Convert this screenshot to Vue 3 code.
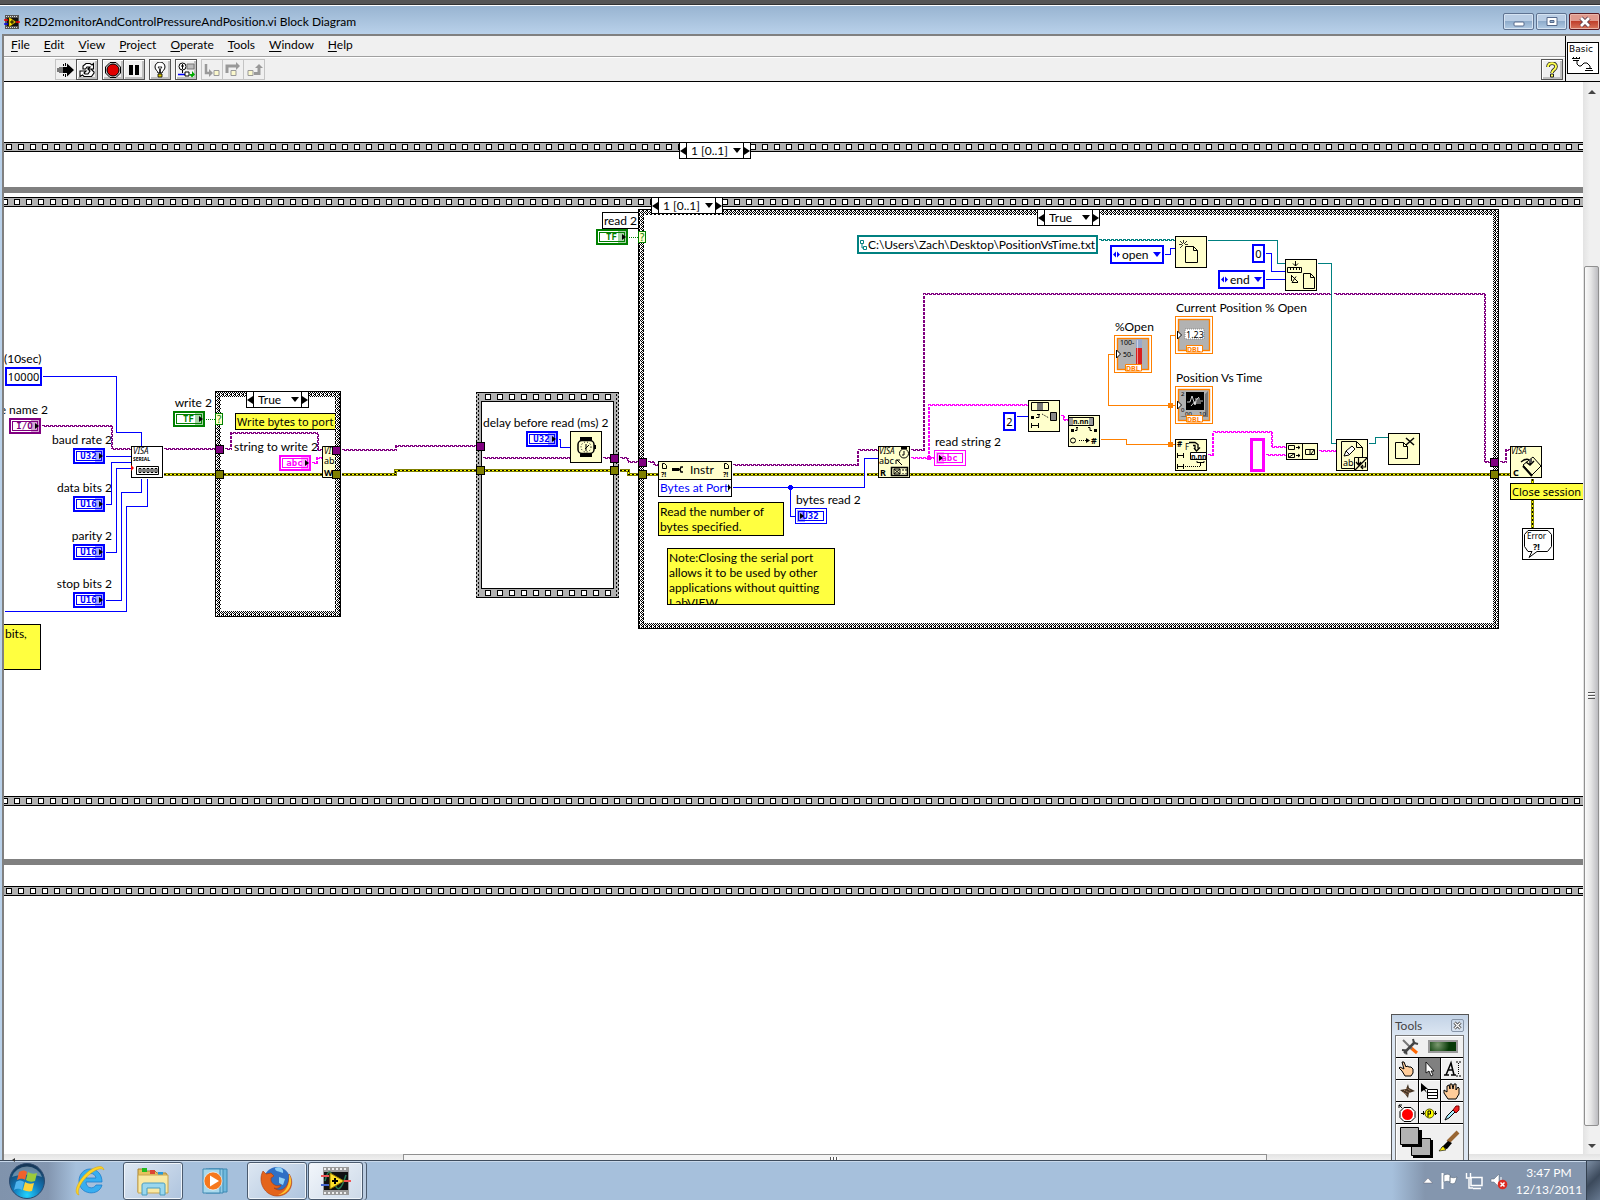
<script setup>
import { ref } from 'vue'

// Diagram coordinates are measured from the window corner; the canvas starts at (4, 82).
const ORIGIN_X = 4
const ORIGIN_Y = 82
const at = (x, y, w, h) => ({
  left: `${x - ORIGIN_X}px`,
  top: `${y - ORIGIN_Y}px`,
  ...(w ? { width: `${w}px` } : {}),
  ...(h ? { height: `${h}px` } : {})
})
const labelAt = (l) =>
  l.end
    ? { right: `calc(100% - ${l.x - ORIGIN_X}px)`, top: `${l.y - 8 - ORIGIN_Y}px` }
    : at(l.x, l.y - 8)

const menus = ['File', 'Edit', 'View', 'Project', 'Operate', 'Tools', 'Window', 'Help']

const labels = [
  { t: '(10sec)', x: 4, y: 359 },
  { t: 'e name 2', x: 48, y: 410, end: true },
  { t: 'baud rate 2', x: 112, y: 440, end: true },
  { t: 'data bits 2', x: 112, y: 488, end: true },
  { t: 'parity 2', x: 112, y: 536, end: true },
  { t: 'stop bits 2', x: 112, y: 584, end: true },
  { t: 'write 2', x: 212, y: 403, end: true },
  { t: 'string to write 2', x: 318, y: 447, end: true },
  { t: 'delay before read (ms) 2', x: 483, y: 423 },
  { t: 'bytes read 2', x: 796, y: 500 },
  { t: 'read string 2', x: 935, y: 442 },
  { t: '%Open', x: 1115, y: 327 },
  { t: 'Current Position % Open', x: 1176, y: 308 },
  { t: 'Position Vs Time', x: 1176, y: 378 }
]

const terminals = [
  { t: 'I/O', x: 9, y: 418, c: 'purple' },
  { t: 'U32', x: 73, y: 448, c: 'blue' },
  { t: 'U16', x: 73, y: 496, c: 'blue' },
  { t: 'U16', x: 73, y: 544, c: 'blue' },
  { t: 'U16', x: 73, y: 592, c: 'blue' },
  { t: 'TF', x: 173, y: 411, c: 'green' },
  { t: 'abc', x: 279, y: 455, c: 'pink' },
  { t: 'U32', x: 526, y: 431, c: 'blue' },
  { t: 'TF', x: 596, y: 229, c: 'green' },
  { t: 'U32', x: 795, y: 508, c: 'blue', sink: true },
  { t: 'abc', x: 934, y: 450, c: 'pink', sink: true }
]

const selectors = [
  { x: 679, y: 142, w: 72, options: ['1 [0..1]', '0 [0..1]'], name: 'Outer sequence frame' },
  { x: 651, y: 197, w: 72, options: ['1 [0..1]', '0 [0..1]'], name: 'Inner sequence frame' },
  { x: 246, y: 391, w: 63, options: ['True', 'False'], name: 'Write case' },
  { x: 1037, y: 209, w: 63, options: ['True', 'False'], name: 'Read case' }
]

const rings = [
  { x: 1110, y: 245, w: 54, options: ['open', 'replace', 'create'], name: 'File operation' },
  { x: 1218, y: 270, w: 47, options: ['end', 'start', 'current'], name: 'Seek from' }
]

const constants = ref([
  { x: 5, y: 367, w: 37, v: '10000', name: 'Timeout' },
  { x: 1252, y: 244, w: 13, v: '0', name: 'Offset' },
  { x: 1003, y: 412, w: 13, v: '2', name: 'String offset' }
])
const filePath = ref('C:\\Users\\Zach\\Desktop\\PositionVsTime.txt')

const strips = [
  { y: 142, p: 'film-a' },
  { y: 197, p: 'film-b' },
  { y: 796, p: 'film-b' },
  { y: 886, p: 'film-a' }
]

const blueWires = [
  '42,376 116,376 116,432 141,432 141,446',
  '105,456 131,456',
  '105,504 111,504 111,462 131,462',
  '105,552 116,552 116,468 131,468',
  '105,600 121,600 121,492 141,492 141,478',
  '4,611 126,611 126,506 147,506 147,478',
  '558,439 560,439 560,447 570,447',
  '732,487 864,487 864,458 878,458',
  '790,487 790,516 795,516',
  '1164,254 1170,254 1170,248 1175,248',
  '1265,253 1271,253 1271,271 1285,271',
  '1265,279 1285,279',
  '1016,416 1028,416'
]
const tealWires = [
  '1207,240 1277,240 1277,263 1285,263',
  '1317,263 1331,263 1331,443 1336,443',
  '1368,443 1375,443 1375,437 1388,437'
]
const orangeWires = [
  '1100,439 1126,439 1126,444 1175,444',
  '1170,444 1170,335 1175,335',
  '1175,405 1108,405 1108,354 1114,354'
]
const purpleWaves = [
  '41,425 111,425 111,448 131,448',
  '163,448 215,448',
  '224,448 230,448 230,432 317,432 317,449 322,449',
  '341,449 395,449 395,445 476,445',
  '482,457 570,457',
  '602,457 610,457',
  '619,457 627,457 627,461 638,461',
  '647,461 653,461 653,464 658,464',
  '732,464 857,464 857,449 878,449',
  '910,449 923,449 923,293 1329,293',
  '1333,293 1484,293 1484,461 1490,461',
  '1499,461 1505,461 1505,449 1510,449'
]
const pinkWaves = [
  '311,462 316,462 316,457 322,457',
  '910,457 934,457',
  '928,457 928,404 1028,404',
  '1060,415 1063,415 1063,419 1068,419',
  '1207,454 1212,454 1212,431 1271,431 1271,446 1286,446',
  '1265,454 1286,454',
  '1318,450 1336,450'
]
const tealWaves = ['1098,239 1175,239']
const waves = [
  ...purpleWaves.map((p) => ({ p, c: '#800080' })),
  ...pinkWaves.map((p) => ({ p, c: '#ff00ff' })),
  ...tealWaves.map((p) => ({ p, c: '#008080' }))
]
const errorWires = [
  '163,474 322,474',
  '341,474 395,474 395,470 610,470',
  '619,470 628,470 628,474 658,474',
  '732,474 863,474',
  '866,474 1510,474',
  '1532,478 1532,528'
]
const tunnels = [
  [215, 445, 0], [332, 446, 0], [476, 442, 0], [610, 454, 0], [638, 458, 0], [1490, 458, 0],
  [215, 470, 1], [332, 470, 1], [476, 466, 1], [610, 466, 1], [638, 470, 1], [1490, 470, 1]
]
</script>

<template>
  <div class="desktop">
    <div class="window">
      <header class="titlebar">
        <svg class="app-icon" width="16" height="14" viewBox="0 0 16 14">
          <rect x="1" width="14" height="14" fill="#555" />
          <path d="M2 1.5h12M2 12.5h12" stroke="#ddd" stroke-dasharray="1 1" />
          <rect x="3" y="3" width="11" height="8" fill="#111" />
          <path d="M5 2v10l7-5z" fill="#ffe400" stroke="#640" stroke-width=".5" />
          <path d="M0 5h4M12 7h4" stroke="red" stroke-width="1.4" />
          <path d="M0 9h4" stroke="#00f" stroke-width="1.4" />
          <path d="M6 7h4M8 5v4" stroke="#000" />
        </svg>
        <h1>R2D2monitorAndControlPressureAndPosition.vi Block Diagram</h1>
        <div class="window-buttons">
          <button aria-label="Minimize"><svg width="12" height="12" viewBox="0 0 12 12"><rect x="1" y="6" width="10" height="4" rx="1" fill="#fff" stroke="#566a8c" /></svg></button>
          <button aria-label="Maximize"><svg width="12" height="12" viewBox="0 0 12 12"><path fill-rule="evenodd" d="M1 1.5h10v8H1zM4 4.500h4v2H4z" fill="#fff" stroke="#566a8c" /></svg></button>
          <button class="close" aria-label="Close"><svg width="14" height="12" viewBox="0 0 14 12"><path d="M3 2l8 8M11 2l-8 8" stroke="#5c3a48" stroke-width="4.5" /><path d="M3 2l8 8M11 2l-8 8" stroke="#fff" stroke-width="2.7" /></svg></button>
        </div>
      </header>

      <div class="frame">
        <div class="bars">
          <div class="bars-main">
            <nav class="menubar">
              <button v-for="m in menus" :key="m"><u>{{ m[0] }}</u>{{ m.slice(1) }}</button>
            </nav>
            <div class="toolbar">
              <div class="tool-group">
                <button class="flat" aria-label="Run"><svg width="18" height="16" viewBox="0 0 18 16"><path d="M6 5h4V1.500L17 8l-7 6.500V11H6z" fill="#000" /><path d="M5 5v6M3 5v6M1 6v4M6.500 2v2M8.500 1v3M6.500 12v2M8.500 12v3" stroke="#000" /></svg></button>
                <button aria-label="Run continuously"><svg width="17" height="16" viewBox="0 0 17 16"><path d="M4 7V4l3-2.500h4l2 1.500 1.500-1.500V7H9l2-2H8L6.500 7zM1 9h6l-2 2 1 1h3l2-3-2-2h3l3 3v1l-2.500 3.500H5L3.500 13 1 14.500z" fill="#fff" stroke="#000" stroke-width="1.1" /></svg></button>
              </div>
              <div class="tool-group">
                <button aria-label="Abort"><svg width="16" height="16" viewBox="0 0 16 16"><path d="M5 .5h6L15.500 5v6L11 15.500H5L.5 11V5z" fill="#ccc" stroke="#000" /><circle cx="8" cy="8" r="6" fill="#e00000" stroke="#000" /></svg></button>
                <button aria-label="Pause"><svg width="16" height="16" viewBox="0 0 16 16"><path d="M3 3h4v10H3zM9 3h4v10H9z" /></svg></button>
              </div>
              <div class="tool-group">
                <button aria-label="Highlight execution"><svg width="12" height="16" viewBox="0 0 12 16"><path d="M4 11c0-2-3-3-3-6a5 5 0 0110 0c0 3-3 4-3 6z" fill="#fff" stroke="#000" /><path d="M4 5l1.500 2v4M8 5L6.500 7v4M4 5h4" fill="none" stroke="#000" stroke-width=".8" /><path d="M4 12h4v3H4z" fill="#dc0" stroke="#000" stroke-width=".8" /></svg></button>
              </div>
              <div class="tool-group">
                <button aria-label="Retain wire values"><svg width="17" height="16" viewBox="0 0 17 16"><circle cx="4.500" cy="4.500" r="3.500" fill="#fff" stroke="#000" /><path d="M4.500 2v5M3 4h3M4.500 8v3" stroke="#000" /><path d="M9 2h7v5H9z" fill="#bbb" stroke="#777" /><path d="M0 12.500h7" stroke="#00f" stroke-width="1.5" /><path d="M7 10h4v4H7z" fill="#fff" stroke="#000" /><path d="M11 12h3V9l3 3.500-3 3z" fill="#0a0" /></svg></button>
              </div>
              <div class="tool-group">
                <button class="flat" aria-label="Step into"><svg width="17" height="16" viewBox="0 0 17 16"><path d="M2 2v9h4" fill="none" stroke="#999" stroke-width="2.5" /><path d="M5 7l4 4-4 4z" fill="#999" /><path d="M10 8.500h5v5h-5z" fill="#fbf8cc" stroke="#999" /></svg></button>
                <button class="flat" aria-label="Step over"><svg width="17" height="16" viewBox="0 0 17 16"><path d="M2 11V4h9" fill="none" stroke="#999" stroke-width="3" /><path d="M11 0l4 4-4 4z" fill="#999" /><path d="M6 8.500h5v5H6z" fill="#fbf8cc" stroke="#999" /></svg></button>
                <button class="flat" aria-label="Step out"><svg width="17" height="16" viewBox="0 0 17 16"><path d="M2 8.500h5v5H2z" fill="#fbf8cc" stroke="#999" /><path d="M8 11.500h5V5" fill="none" stroke="#999" stroke-width="3" /><path d="M9 6l4-4 4 4z" fill="#999" /></svg></button>
              </div>
              <button class="help" aria-label="Context help"><svg width="12" height="16" viewBox="0 0 12 16"><path d="M2 5c0-5 8-5 8-.5C10 8 6 7.500 6 11" fill="none" stroke="#222" stroke-width="3.6" /><path d="M2 5c0-5 8-5 8-.5C10 8 6 7.500 6 11" fill="none" stroke="#ffff50" stroke-width="2" /><path d="M4.500 12h3v3h-3z" fill="#ffff50" stroke="#222" /></svg></button>
            </div>
          </div>
          <div class="vi-pane">
            <div class="vi-icon">
              <span>Basic</span>
              <svg width="22" height="15" viewBox="0 0 22 15"><path d="M0 1.500h8M1 3.500h6M5 4v3l2 2h2l3-3h3l3 3v2M14 11.500h6M13 13.500h8M1.500 0v2M4.500 0v2M7.500 0v2" fill="none" stroke="#000" /></svg>
            </div>
          </div>
        </div>

        <div class="work">
          <main class="canvas">
            <svg class="wiring" width="100%" height="100%" shape-rendering="crispEdges">
              <defs>
                <pattern id="film-a" width="12" height="10" patternUnits="userSpaceOnUse" x="6" y="0">
                  <rect width="12" height="10" fill="#b2b2b2" /><rect x=".5" y="2.5" width="5" height="5" fill="#fff" stroke="#000" />
                </pattern>
                <pattern id="film-b" width="12" height="10" patternUnits="userSpaceOnUse" x="2" y="0">
                  <rect width="12" height="10" fill="#b2b2b2" /><rect x=".5" y="2.5" width="5" height="5" fill="#fff" stroke="#000" />
                </pattern>
                <pattern id="film-c" width="12" height="10" patternUnits="userSpaceOnUse" x="485">
                  <rect width="12" height="10" fill="#b2b2b2" /><rect x=".5" y="2.5" width="5" height="5" fill="#fff" stroke="#000" />
                </pattern>
                <pattern id="weave" width="4" height="4" patternUnits="userSpaceOnUse">
                  <rect width="4" height="4" fill="#fff" />
                  <path d="M0 0h1v1H0zM2 0h1v1H2zM1 1h1v1H1zM3 1h1v1H3zM2 2h1v1H2zM1 3h1v1H1zM3 3h1v1H3zM3 2h1v1H3z" />
                </pattern>
              </defs>
              <g transform="translate(-4 -82)">
                <rect x="4" y="187" width="100%" height="6" fill="#808080" />
                <rect x="4" y="859" width="100%" height="6" fill="#808080" />
                <g v-for="s in strips" :key="s.y" :transform="`translate(0 ${s.y})`">
                  <rect x="4" width="100%" height="10" :fill="`url(#${s.p})`" />
                  <path d="M4 .5h3000M4 9.500h3000" stroke="#000" />
                </g>

                <!-- structures -->
                <g fill="none">
                  <path fill-rule="evenodd" d="M215 391h126v226H215zM221 397v214h114V397z" fill="url(#weave)" />
                  <rect x="215.5" y="391.5" width="125" height="225" stroke="#000" />
                  <path fill-rule="evenodd" d="M638 209h861v420H638zM644 215v408h849V215z" fill="url(#weave)" />
                  <rect x="638.5" y="209.5" width="860" height="419" stroke="#000" />
                </g>
                <rect x="476" y="392" width="143" height="206" fill="#b2b2b2" />
                <g transform="translate(0 392)"><rect x="484" width="130" height="10" fill="url(#film-c)" /></g>
                <g transform="translate(0 588)"><rect x="484" width="130" height="10" fill="url(#film-c)" /></g>
                <rect x="481.5" y="401.5" width="132" height="187" fill="#fff" stroke="#000" />
                <path d="M476 392.500h143M476 597.500h143" stroke="#000" />
                <path d="M476.500 392v206M618.500 392v206M478.500 394v202M616.500 394v202" stroke="#000" stroke-dasharray="2 2" />

                <!-- wires -->
                <g fill="none" transform="translate(.5 .5)">
                  <polyline v-for="p in blueWires" :key="p" :points="p" stroke="#0000ff" />
                  <polyline v-for="p in tealWires" :key="p" :points="p" stroke="#008080" />
                  <polyline v-for="p in orangeWires" :key="p" :points="p" stroke="#ff8000" />
                  <g v-for="w in waves" :key="w.p" :stroke="w.c">
                    <polyline :points="w.p" stroke-dasharray="3 1" />
                    <polyline :points="w.p" stroke-dasharray="3 1" stroke-dashoffset="3" transform="translate(1 1)" />
                  </g>
                  <g v-for="p in errorWires" :key="p">
                    <polyline :points="p" stroke="#808000" stroke-width="3" />
                    <polyline :points="p" stroke="#ffff00" />
                    <polyline :points="p" stroke="#000" stroke-dasharray="2 2" />
                  </g>
                  <path d="M205 419h10M628 237h10" stroke="#008000" stroke-dasharray="1 1" />
                </g>
                <g fill="#ff8000"><circle cx="1170.5" cy="405.5" r="3" /><circle cx="1170.5" cy="444.5" r="3" /></g>
                <circle cx="790.5" cy="487.5" r="2.5" fill="#00f" />
                <circle cx="929" cy="458" r="2.5" fill="#f0f" />
              </g>

              <g class="nodes" transform="translate(-4 -82)" shape-rendering="auto">
                <!-- case selector terminals -->
                <g fill="#ffffcc" stroke="#008000"><rect x="215.5" y="413.5" width="7" height="11" /><rect x="638.5" y="231.5" width="7" height="11" /></g>
                <g font-size="10" fill="#008000"><text x="217" y="423">?</text><text x="640" y="241">?</text></g>

                <!-- serial configuration -->
                <g transform="translate(131 446)">
                  <rect x=".5" y=".5" width="31" height="31" fill="#fff" stroke="#000" />
                  <text x="2" y="8" font-size="8" font-style="italic">VISA</text>
                  <text x="2" y="15" font-size="5" font-weight="bold">SERIAL</text>
                  <path d="M5.500 20.500h22v8h-22z" fill="#fff" stroke="#000" />
                  <path d="M8 22.500h2v4H8zM12 22.500h2v4h-2zM16 22.500h2v4h-2zM20 22.500h2v4h-2zM24 22.500h2v4h-2z" fill="#fff" stroke="#000" />
                  <path d="M0 19l3 3-3 3z" fill="red" />
                </g>

                <!-- serial write, cropped by the case edge -->
                <g transform="translate(322 446)">
                  <path d="M0 0h13v32H0z" fill="#ffffcc" /><path d="M13 .5H.5v31H13" fill="none" stroke="#000" />
                  <text x="2" y="8" font-size="8" font-style="italic">VI</text>
                  <text x="2" y="18" font-size="9">ab</text>
                  <text x="2" y="30" font-size="9" font-weight="bold">W</text>
                </g>

                <!-- wait -->
                <g transform="translate(570 431)">
                  <rect x=".5" y=".5" width="31" height="31" fill="#ffffcc" stroke="#000" />
                  <path d="M10 6h12v20H10z" /><rect x="8" y="9.5" width="16" height="13" rx="4" fill="#ffffcc" stroke="#000" stroke-width="1.5" />
                  <circle cx="16" cy="16" r="5" fill="none" stroke="#000" stroke-dasharray="1 2" /><path d="M16 20v-7M15 18l4-4" stroke="#000" fill="none" /><path d="M24 14h2v4h-2z" />
                </g>

                <!-- property node -->
                <g transform="translate(658 461)">
                  <rect x=".5" y=".5" width="73" height="35" fill="#fff" stroke="#000" /><path d="M1 1h72v17H1z" fill="#ffffcc" /><path d="M0 18.500h74" stroke="#000" />
                  <g fill="none" stroke="#000"><path d="M4.500 2.500h2l2 2v3h-4zM66.500 2.500h2l2 2v3h-4z" /></g>
                  <text x="3" y="16" font-size="7" font-weight="bold">?!</text><text x="65" y="16" font-size="7" font-weight="bold">?!</text>
                  <path d="M14 8.500h7" stroke="#000" stroke-width="3" /><path d="M20 8.500h2M25 6h-2l-1 2.500 1 2.500h2" fill="none" stroke="#000" stroke-width="1.4" />
                  <path d="M70 23l3 3.500-3 3.500z" />
                </g>

                <!-- serial read -->
                <g transform="translate(878 446)">
                  <rect x=".5" y=".5" width="31" height="31" fill="#ffffcc" stroke="#000" />
                  <text x="1" y="8" font-size="8" font-style="italic">VISA</text>
                  <text x="1" y="18" font-size="9">abc</text><text x="2" y="30" font-size="9" font-weight="bold">R</text>
                  <circle cx="26" cy="7.5" r="4.500" fill="#ffffcc" stroke="#000" /><path d="M23 0h6v3h-6z" /><path d="M26 5v4h-2M19 14l5 5M18 18v-4h4" fill="none" stroke="#000" />
                  <path d="M13.500 21.500h16v8h-16z" fill="#ffffcc" stroke="#000" stroke-width="1.5" /><path d="M16 23h6v5h-6zM16 23l6 5M22 23l-6 5M25 23v2M25 27v1M28 23v2M28 27v1" fill="none" stroke="#000" />
                </g>

                <!-- string subset -->
                <g transform="translate(1028 400)">
                  <rect x=".5" y=".5" width="31" height="31" fill="#ffffcc" stroke="#000" />
                  <path d="M3.500 2.500h17v8h-17z" fill="#ffffcc" stroke="#000" /><path d="M9 3h6v7H9z" fill="#777" /><path d="M22.500 12.500h6v8h-6z" fill="#888" stroke="#000" />
                  <path d="M3 16h3v3H3z" /><path d="M8 17.500h3v-3M9 14.500h3M3.500 23v5M10.500 23v5M4 25.500h7" fill="none" stroke="#000" /><path d="M14 14l7 4" stroke="#000" stroke-dasharray="1 1" />
                </g>

                <!-- scan number -->
                <g transform="translate(1068 415)">
                  <rect x=".5" y=".5" width="31" height="31" fill="#ffffcc" stroke="#000" />
                  <path d="M.5 2.500h25v8H.5z" fill="#999" stroke="#000" /><path d="M5 3h16v7H5z" fill="#ffffcc" /><text x="5" y="9" font-size="7" font-weight="bold">n.nn</text>
                  <path d="M3 14h3v3H3zM26 14h3v3h-3z" /><path d="M7 15.500h2v-3M8 12.500h2M24 15.500h-2v-3M20 12.500h2" stroke="#000" fill="none" />
                  <circle cx="5" cy="25.5" r="2.5" fill="none" stroke="#000" /><path d="M11 25.500h7" stroke="#000" stroke-dasharray="1 1" /><path d="M18 23l4 2.500-4 2.500z" /><text x="23" y="29" font-size="9" font-weight="bold">#</text>
                </g>

                <!-- number to string -->
                <g transform="translate(1175 439)">
                  <rect x=".5" y=".5" width="31" height="31" fill="#ffffcc" stroke="#000" />
                  <text x="2" y="8" font-size="8" font-weight="bold">#</text><text x="10" y="11" font-size="8">F</text>
                  <path d="M14 3.500h6l3 2v4M18 6.500h2v3M19 9l2.500 3L25 8.500" fill="none" stroke="#000" stroke-width="1.3" />
                  <path d="M15.500 13.500h16v7h-16z" fill="#fff" stroke="#000" /><text x="16" y="20" font-size="7" font-weight="bold">n.nn</text>
                  <path d="M2.500 14v5M8.500 14v5M3 16.500h6M2.500 25v5M8.500 25v5M3 27.500h6M22 22v1.500h7V22M25.500 24v3" fill="none" stroke="#000" /><path d="M10 27.500h15" stroke="#000" stroke-dasharray="1 1" />
                </g>

                <!-- file open -->
                <g transform="translate(1175 236)">
                  <rect x=".5" y=".5" width="31" height="31" fill="#ffffcc" stroke="#000" />
                  <path d="M10.500 10.500h8l4 4v12h-12zM18.500 10.500v4h4" fill="#ffffcc" stroke="#000" />
                  <path d="M5 5l3 3M8.500 4v3M12 5l-3 3M4 8.500h3M10 8.500h3M5 12l3-3" stroke="#000" stroke-width=".8" />
                </g>

                <!-- set position -->
                <g transform="translate(1285 259)">
                  <rect x=".5" y=".5" width="31" height="31" fill="#ffffcc" stroke="#000" />
                  <path d="M10.500 2v5M8 4.500l2.500 2.500L13 4.500M2.500 8.500h14v5h-14zM5.500 9v2M8.500 9v2M11.500 9v2M14.500 9v2M6.500 16v6M13 23.500H7l4-6M7 17l6 6" fill="none" stroke="#000" />
                  <path d="M18.500 14.500h7l4 4v11h-11zM25.500 14.500v4h4" fill="#ffffcc" stroke="#000" />
                </g>

                <!-- concatenate strings -->
                <g transform="translate(1286 443)">
                  <rect x=".5" y=".5" width="31" height="16" fill="#ffffcc" stroke="#000" /><path d="M16.500 0v17" stroke="#000" />
                  <path d="M2.500 2.500h6v4h-6zM2.500 10.500h6v4h-6zM2.500 14.500l6-4M10 4.500h4M10 12.500h4M12 3l2 1.500-2 1.500M12 11l2 1.500-2 1.500M19.500 6.500h9v5h-9zM24 6v5M25 11l3-4" fill="none" stroke="#000" />
                </g>

                <!-- write text file -->
                <g transform="translate(1336 439)">
                  <rect x=".5" y=".5" width="31" height="31" fill="#ffffcc" stroke="#000" />
                  <path d="M5.500 2.500h15l6 6v21h-21zM20.500 2.500v6h6" fill="#ffffcc" stroke="#000" />
                  <path d="M8 17l2-5 6-5 3 3-6 6zM10 12l3 3" fill="#fff" stroke="#000" /><text x="7" y="27" font-size="9">ab</text>
                  <path d="M18.500 18.500h13v13h-13z" fill="#ffffcc" stroke="#000" /><path d="M31 19L19 31M22.500 19v6M20 23l2.500 3 2.500-3M29.500 23v5h-4M27 26l-2 2 2 2" fill="none" stroke="#000" stroke-width="1.2" />
                </g>

                <!-- close file -->
                <g transform="translate(1388 433)">
                  <rect x=".5" y=".5" width="31" height="31" fill="#ffffcc" stroke="#000" />
                  <path d="M7.500 9.500h8l4 4v12h-12zM15.500 9.500v4h4" fill="#ffffcc" stroke="#000" /><path d="M18 5l8 7M26 5l-8 7" stroke="#000" stroke-width="1.5" />
                </g>

                <!-- serial close -->
                <g transform="translate(1510 446)">
                  <rect x=".5" y=".5" width="31" height="31" fill="#ffffcc" stroke="#000" />
                  <text x="1" y="8" font-size="8" font-style="italic">VISA</text><text x="3" y="30" font-size="9" font-weight="bold">C</text>
                  <path d="M13 19l10-8 8 9-9 9z" fill="#ffffcc" stroke="#000" /><path d="M13 20l9 10" stroke="#000" stroke-width="2" />
                  <path d="M11 16l3-2c4-2 7 0 6 4M16 16l4 3 4-4" fill="none" stroke="#000" stroke-width="1.5" /><path d="M19 13h3v4h-3z" fill="#555" />
                </g>

                <!-- error handler -->
                <g transform="translate(1522 528)">
                  <rect x=".5" y=".5" width="31" height="31" fill="#fff" stroke="#000" />
                  <path d="M6 2.500h20l3.500 4v12l-4 5H15l-8 6 3-6H6l-3.500-5v-12z" fill="#fff" stroke="#000" />
                  <text x="5" y="11" font-size="8">Error</text><text x="11" y="22" font-size="9" font-weight="bold">?!</text>
                </g>

                <!-- double-precision indicators -->
                <g v-for="k in [[1114, 335], [1175, 316], [1175, 386]]" :key="k.join()" :transform="`translate(${k[0]} ${k[1]})`">
                  <rect x=".5" y=".5" width="37" height="37" fill="#fff" stroke="#ff8000" /><rect x="3.5" y="3.5" width="31" height="31" fill="#b2b2b2" stroke="#ff8000" stroke-width="1.4" />
                </g>
                <g transform="translate(1114 335)">
                  <text x="6" y="10" font-size="7">100-</text><text x="9" y="22" font-size="7">50-</text>
                  <path d="M22 4h6v10h-6z" fill="#99a8cc" /><path d="M22 13h6v21h-6z" fill="#d81f1f" /><path d="M23 5h1v28h-1z" fill="#fff" opacity=".5" />
                </g>
                <g transform="translate(1175 316)"><path d="M10 13h19v10H10z" fill="#fff" stroke="#888" stroke-dasharray="1 1" /><text x="11" y="22" font-size="9">1.23</text></g>
                <g transform="translate(1175 386)">
                  <path d="M5 31h28V5l-3 3v22H7z" fill="#777" /><path d="M11 6h18v18H11z" /><path d="M12 16h3l2-6 3 9 1-4h7M16 20l8-9M20 13h5M19 17h7" fill="none" stroke="#fff" stroke-width=".8" />
                  <text x="6" y="10" font-size="6">2</text><text x="6" y="26" font-size="6">0</text><text x="10" y="30" font-size="6">00</text><text x="24" y="30" font-size="6">10</text>
                </g>
                <g v-for="k in [[1114, 335], [1175, 316], [1175, 386]]" :key="'d' + k.join()" :transform="`translate(${k[0]} ${k[1]})`">
                  <path d="M2.500 15v8l4-4z" fill="#fff" stroke="#000" />
                  <path d="M11.500 36v-6.500h16V36z" fill="#fff" stroke="#ff8000" /><text x="12" y="36" font-size="7" font-weight="bold" fill="#ff8000">DBL</text>
                </g>
                <rect x="1251.5" y="439.5" width="12" height="31" fill="#fff" stroke="#ff00ff" stroke-width="3" />
              </g>
            </svg>

            <span v-for="l in labels" :key="l.t" class="label" :style="labelAt(l)">{{ l.t }}</span>
            <span class="label boxed" :style="at(602, 212, 37, 17)">read 2</span>
            <span class="label" :style="at(690, 462)">Instr</span>
            <span class="label property" :style="at(660, 480)">Bytes at Port</span>

            <div v-for="(t, i) in terminals" :key="i" class="terminal" :class="[t.c, { sink: t.sink }]" :style="at(t.x, t.y)">
              <span>{{ t.t }}</span><i></i>
            </div>

            <div class="note" :style="at(3, 624, 38, 46)">bits,</div>
            <div class="note single" :style="at(235, 413, 100, 17)">Write bytes to port</div>
            <div class="note" :style="at(658, 502, 126, 34)">Read the number of bytes specified.</div>
            <div class="note" :style="at(667, 548, 168, 57)">Note:Closing the serial port allows it to be used by other applications without quitting LabVIEW.</div>
            <div class="note single" :style="at(1510, 483, 76, 17)">Close session</div>

            <input v-for="c in constants" :key="c.name" v-model="c.v" class="constant" :aria-label="c.name" :style="at(c.x, c.y, c.w, 19)" />
            <div class="path-constant" :style="at(857, 235, 241, 19)">
              <svg width="8" height="12" viewBox="0 0 8 12"><path d="M1.500 1.500h3v3h-3zM4.500 7.500h3v3h-3zM3 5v4h1" fill="none" stroke="#008080" /></svg>
              <input v-model="filePath" aria-label="Log file path" />
            </div>
            <div v-for="r in rings" :key="r.name" class="ring" :style="at(r.x, r.y, r.w, 19)">
              <svg width="7" height="7" viewBox="0 0 7 7"><path d="M0 3.500L3 .5v6zM7 3.500L4 .5v6z" fill="#00f" /></svg>
              <select :aria-label="r.name"><option v-for="o in r.options" :key="o">{{ o }}</option></select>
              <svg class="drop" width="8" height="5" viewBox="0 0 8 5"><path d="M0 0h8L4 5z" fill="#00f" /></svg>
            </div>
            <div v-for="s in selectors" :key="s.name" class="selector" :style="at(s.x, s.y, s.w, 17)">
              <button aria-label="Previous"><svg width="6" height="8" viewBox="0 0 6 8"><path d="M6 0v8L0 4z" /></svg></button>
              <select :aria-label="s.name"><option v-for="o in s.options" :key="o">{{ o }}</option></select>
              <svg class="drop" width="8" height="5" viewBox="0 0 8 5"><path d="M0 0h8L4 5z" /></svg>
              <button aria-label="Next"><svg width="6" height="8" viewBox="0 0 6 8"><path d="M0 0v8l6-4z" /></svg></button>
            </div>

            <div v-for="(t, i) in tunnels" :key="'t' + i" class="tunnel" :class="{ error: t[2] }" :style="at(t[0], t[1])"></div>
          </main>

          <div class="vscroll">
            <button aria-label="Scroll up"><svg width="8" height="4" viewBox="0 0 8 4"><path d="M4 0l4 4H0z" fill="#444" /></svg></button>
            <div class="vthumb"><i></i></div>
            <button aria-label="Scroll down"><svg width="8" height="4" viewBox="0 0 8 4"><path d="M0 0h8L4 4z" fill="#444" /></svg></button>
          </div>
          <div class="hscroll"><span class="arrow"></span><div class="hthumb"><i></i></div></div>

          <aside class="palette">
            <div class="palette-title">Tools<button aria-label="Close palette"><svg width="9" height="9" viewBox="0 0 9 9"><path d="M1.500 1.500l6 6M7.500 1.500l-6 6" stroke="#444" stroke-width="3" /><path d="M1.500 1.500l6 6M7.500 1.500l-6 6" stroke="#fff" stroke-width="1.2" /></svg></button></div>
            <div class="palette-body">
              <button class="auto" aria-label="Automatic tool selection">
                <svg width="18" height="17" viewBox="0 0 18 17"><path d="M9 9l7 6" stroke="#f60" stroke-width="3" /><path d="M2 2l9 9" stroke="#777" stroke-width="2" /><path d="M3 15L14 4" stroke="#444" stroke-width="2.5" /><path d="M12 1l1 4 4 1M1 12l4 .5.5 4" fill="none" stroke="#444" stroke-width="2" /></svg>
                <span class="led"></span>
              </button>
              <button aria-label="Operate value"><svg width="18" height="18" viewBox="0 0 18 18"><path d="M7 16l-3-5-3-3 1-1 4 2-2-7h2l2 5 1-1 2 1h2l2 2v4l-2 3z" fill="#ffcc99" stroke="#000" /></svg></button>
              <button class="on" aria-label="Position"><svg width="18" height="18" viewBox="0 0 18 18"><path d="M6 2v11l3-2 2 5 2-1-2-4h3z" fill="#fff" stroke="#000" stroke-width=".8" /></svg></button>
              <button aria-label="Edit text"><svg width="18" height="18" viewBox="0 0 18 18"><path d="M1 15h5M8 15h5M3 15L8 3l3 12M5 10h5" fill="none" stroke="#000" stroke-width="1.5" /><path d="M15.500 3v12" stroke="#000" stroke-dasharray="1 1" /><path d="M13 2h2M16 2h2M13 16h2M16 16h2" stroke="#000" /></svg></button>
              <button aria-label="Connect wire"><svg width="18" height="18" viewBox="0 0 18 18"><path d="M2 8l6-1 2-5 1 4 6 3-6 2-1 5-3-4z" fill="#432" /><path d="M6 8l6 3M8 6l5 3M5 10l5 3" stroke="#c97" stroke-dasharray="1 1" /></svg></button>
              <button aria-label="Object shortcut menu"><svg width="20" height="18" viewBox="0 0 20 18"><path d="M2 1v9l3-2 3 3-2-4h3z" /><path d="M8.500 7.500h10v9h-10zM8 10.500h11M8 13.500h11" fill="#fff" stroke="#000" /></svg></button>
              <button aria-label="Scroll window"><svg width="18" height="18" viewBox="0 0 18 18"><path d="M5 17l-4-6V8l3 2V4l2-1 1 4V2h2l1 5 1-5h2v6l2-3 1 1v6l-3 5z" fill="#ffcc99" stroke="#000" /></svg></button>
              <button aria-label="Breakpoint"><svg width="18" height="18" viewBox="0 0 18 18"><path d="M6 3.500h7l4 4v6l-4 4H6l-4-4v-6z" fill="#fff" stroke="#000" /><circle cx="9.500" cy="10.5" r="5.5" fill="red" /><path d="M1 4V1h3M1 1l3 3" stroke="#000" fill="none" /></svg></button>
              <button aria-label="Probe data"><svg width="18" height="18" viewBox="0 0 18 18"><path d="M1 9.500h16M3.500 7v4M15.500 7v4" stroke="#000" /><circle cx="9.500" cy="9.500" r="4.500" fill="#ff0" stroke="#550" /><path d="M8 13V7h2.500v3H8" fill="none" stroke="#000" /></svg></button>
              <button aria-label="Get colour"><svg width="18" height="18" viewBox="0 0 18 18"><path d="M2 16l2-4 6-6 2 2-6 6z" fill="#aef" stroke="#000" /><path d="M10 6l3-4h3v4l-3 3z" fill="#e22" stroke="#700" /></svg></button>
              <button class="colour" aria-label="Set colour">
                <svg width="62" height="34" viewBox="0 0 62 34"><path d="M15 14h20v18H15z" fill="#000" /><path d="M13.500 12.500h19v17h-19z" fill="#b2b2b2" stroke="#000" /><path d="M4 4h20v17H4z" /><path d="M2.500 1.500h18v17h-18z" fill="#b2b2b2" stroke="#000" /><path d="M50 16L60 6" stroke="#963" stroke-width="4" /><path d="M43 22l7-7 4 2-5 6z" /><path d="M41 25l4-5 3 4z" fill="#fe0" stroke="#000" stroke-width=".6" /></svg>
              </button>
            </div>
          </aside>
        </div>
      </div>
    </div>

    <footer class="taskbar">
      <button class="start" aria-label="Start"><svg width="38" height="38" viewBox="0 0 38 38">
        <defs><radialGradient id="orb" cx=".5" cy=".9" r=".9"><stop offset="0" stop-color="#22d3ff" /><stop offset=".45" stop-color="#1277b8" /><stop offset="1" stop-color="#16304d" /></radialGradient></defs>
        <circle cx="19" cy="19" r="17.5" fill="url(#orb)" stroke="#2b4a70" /><path d="M4 15a15.500 14 0 0130 0c-8-3-22-3-30 0z" fill="#fff" opacity=".35" />
        <path d="M11 10c3-2 6-2 8 0l-2 8c-3-2-5-1-8 0z" fill="#f0622b" /><path d="M20 10c3 2 6 2 9 1l-2 8c-3 1-6 1-9-1z" fill="#9ccb3b" /><path d="M8 20c3-2 5-2 8 0l-2 8c-2-1-5-2-8 0z" fill="#4fb4ee" /><path d="M17 20c3 2 6 2 9 1l-2 8c-3 1-6 0-9-1z" fill="#fdd238" />
      </svg></button>
      <button class="task" aria-label="Internet Explorer"><svg width="32" height="32" viewBox="0 0 32 32">
        <path d="M16 4c8 0 12 6 12 13H12c0 6 7 8 10 3h6c-3 12-23 10-23-4C5 9 10 4 16 4zM12 13h10c-1-6-9-6-10 0z" fill="#38aef0" stroke="#1f7fcb" stroke-width=".8" fill-rule="evenodd" /><path d="M5 30C-3 28 7 10 18 4c6-3 11-4 12 1-3-3-9 0-14 4C8 15 2 26 5 30z" fill="#ffd426" stroke="#d9a400" stroke-width=".5" />
      </svg></button>
      <button class="task open" aria-label="Windows Explorer"><svg width="34" height="32" viewBox="0 0 34 32">
        <path d="M2 4h7l2 2h8l2 2h9l1 2v17H2z" fill="#e7c25e" stroke="#a88434" /><path d="M6 3h5v4H6z" fill="#2b2" /><path d="M14 5h5v4h-5z" fill="#d43" /><path d="M22 7h5v4h-5z" fill="#29d" /><path d="M2 10h30v18H2z" fill="#f9e9a4" stroke="#c9a550" /><path d="M6 30V20c0-2 2-2 3-2h17c2 0 3 0 3 2v10h-5v-7H11v7z" fill="#9ad7ee" stroke="#4a9cc0" />
      </svg></button>
      <button class="task media" aria-label="Media Player"><svg width="32" height="32" viewBox="0 0 32 32">
        <path d="M9 4h18v23H9z" fill="#6fb9dd" stroke="#3e89b3" /><path d="M6 4h17v24H6z" fill="#8fcbe6" stroke="#3e89b3" /><path d="M3 4h17v24H3z" fill="#a8d8ec" stroke="#3e89b3" /><circle cx="13" cy="16" r="9" fill="#f6781d" stroke="#fff" stroke-width=".6" /><path d="M10 10.500v11l9-5.500z" fill="#fff" />
      </svg></button>
      <button class="task open" aria-label="Firefox"><svg width="34" height="32" viewBox="0 0 34 32">
        <circle cx="17" cy="15" r="13" fill="#2f6fc4" /><path d="M15 3c5-2 9 1 8 5-4-2-8-1-8-5zM19 12l6 2-2 6-4-2z" fill="#8fd0f5" />
        <path d="M3 6l3 3 5-1 3 3-3 2v3c2 4 6 6 10 4-1 3-4 4-7 3 8 6 16-2 15-14 6 8 2 22-12 22C5 31-3 17 3 6z" fill="#e4641b" stroke="#a8380c" stroke-width=".6" /><path d="M29 9c5 8 1 20-11 21 8-3 12-10 11-21z" fill="#fdc530" />
      </svg></button>
      <button class="task open last" aria-label="LabVIEW"><svg width="32" height="32" viewBox="0 0 32 32">
        <path d="M3 2h26v28H3z" fill="#9a9a9a" /><path d="M4 4h24M4 28h24" stroke="#eee" stroke-width="2" stroke-dasharray="2 2" /><path d="M4 7h24v18H4z" fill="#111" /><path d="M5 16c3-12 6-12 9 0s7 10 12-6" fill="none" stroke="#2a7a55" stroke-width="1.5" /><path d="M10 8v16l14-8z" fill="#ffe02a" stroke="#987a00" /><path d="M12 16h6M15 13v6" stroke="#000" stroke-width="2" /><path d="M1 11h8M24 16h7" stroke="#e55" stroke-width="2" /><path d="M1 20h8" stroke="#46c" stroke-width="2" />
      </svg></button>
      <div class="tray">
        <button aria-label="Show hidden icons"><svg width="10" height="6" viewBox="0 0 10 6"><path d="M5 0l4.500 5h-9z" fill="#fff" stroke="#556" stroke-width=".4" /></svg></button>
        <button aria-label="Action Center"><svg width="18" height="18" viewBox="0 0 18 18"><path d="M2.500 1v16" stroke="#fff" stroke-width="2" /><path d="M4 3c3-1 4-1 6 0v7c-2-1-3-1-6 0zM10 5c3 1 4 1 7 0l-2 6c-2 1-3 1-5 0z" fill="#fff" stroke="#456" stroke-width=".5" /></svg></button>
        <button aria-label="Network"><svg width="18" height="18" viewBox="0 0 18 18"><path d="M6 5.500h11v8H6z" fill="#7d90aa" stroke="#fff" stroke-width="1.5" /><path d="M8 16.500h8M4 7v9h4M1.500 1v5h4V1" stroke="#fff" stroke-width="1.4" fill="none" /></svg></button>
        <button aria-label="Volume muted"><svg width="18" height="18" viewBox="0 0 18 18"><path d="M1 7h3l5-5v13l-5-5H1z" fill="#fff" stroke="#567" stroke-width=".5" /><path d="M11 5v4" stroke="#fff" /><circle cx="12.500" cy="12.5" r="4.800" fill="#dc2a22" /><path d="M10.500 10.500l4 4M14.500 10.500l-4 4" stroke="#fff" stroke-width="1.5" /></svg></button>
      </div>
      <div class="clock"><time>3:47 PM</time><time>12/13/2011</time></div>
      <button class="peek" aria-label="Show desktop"></button>
    </footer>
  </div>
</template>

<style>
body { margin: 0; }
</style>

<style scoped>
.desktop {
  display: flex;
  flex-direction: column;
  min-height: 100vh;
  border-top: 4px solid #555;
  box-sizing: border-box;
  background: #b9d1ea;
  color: #000;
  font: 12px/16px Lato, "Open Sans", sans-serif;
  font-variant-ligatures: none;
  overflow: hidden;
}
button, input, select {
  margin: 0;
  padding: 0;
  border: 0;
  background: none;
  color: inherit;
  font: inherit;
  font-variant-ligatures: none;
  border-radius: 0;
  appearance: none;
}
svg { display: block; flex: none; }
.window { flex: 1; display: flex; flex-direction: column; }
.titlebar {
  display: flex;
  align-items: center;
  height: 30px;
  box-sizing: border-box;
  padding: 4px 0 0 4px;
  border-top: 1px solid #333;
  box-shadow: inset 0 1px #fff;
  background: linear-gradient(#97b3d0, #b9d1ea);
}
.titlebar h1 { flex: 1; margin: 1px 0 0 4px; font: inherit; }
.window-buttons { display: flex; gap: 2px; }
.window-buttons button {
  display: grid;
  place-items: center;
  width: 31px;
  height: 17px;
  border: 1px solid #5f7391;
  border-radius: 2px;
  box-shadow: inset 0 0 0 1px #d5e3f2;
  background: linear-gradient(#b9cde4 50%, #8faccb 50%, #b2cbe4);
  box-sizing: border-box;
}
.window-buttons .close { border-color: #5a1a22; background: linear-gradient(#e09a8e 50%, #c0402c 50%, #d8755c); box-shadow: inset 0 0 0 1px #eab5a8; }
.frame { flex: 1; display: flex; flex-direction: column; margin-left: 2px; border-left: 2px solid #808080; border-top: 2px solid #808080; }
.bars { display: flex; background: #f0f0f0; border-bottom: 1px solid #000; }
.bars-main { flex: 1; }
.menubar { display: flex; gap: 14px; height: 20px; padding-left: 7px; border-bottom: 1px solid #a0a0a0; }
.menubar button { height: 18px; }
.menubar u { text-underline-offset: 2px; }
.toolbar { display: flex; height: 24px; box-sizing: border-box; padding: 1px 2px 0 51px; gap: 4px; border-top: 1px solid #fff; }
.tool-group { display: flex; padding-right: 1px; }
.toolbar button {
  display: grid;
  place-items: center;
  width: 22px;
  height: 21px;
  margin-right: -1px;
  box-sizing: border-box;
  border: 1px solid #555;
  background: #f0f0f0;
  box-shadow: inset 1px 1px #fff, inset -2px -2px #c0c0c0;
}
.toolbar .flat { border-color: #c4c4c4; box-shadow: none; }
.toolbar .help { margin-left: auto; margin-right: 0; }
.vi-pane { width: 35px; box-sizing: border-box; border-left: 1px solid #000; padding: 6px 1px; }
.vi-icon { width: 32px; height: 32px; box-sizing: border-box; border: 1px solid #000; background: #fff; font: 9px/13px "DejaVu Sans", sans-serif; padding-left: 1px; }
.vi-icon svg { margin-left: 3px; margin-top: 1px; }
.work { position: relative; flex: 1; display: grid; grid-template: 1fr 6px / 1fr 17px; min-height: 1078px; }
.canvas { position: relative; overflow: hidden; background: #fff; }
.wiring { position: absolute; inset: 0; font-family: "Noto Sans", sans-serif; }
.label { position: absolute; white-space: nowrap; line-height: 16px; }
.boxed { border: 1px solid #000; box-sizing: border-box; line-height: 15px; text-align: center; background: #fff; }
.property { color: #00f; }
.note { position: absolute; box-sizing: border-box; border: 1px solid #000; background: #ffff40; line-height: 15px; padding: 1px 0 0 1px; overflow: hidden; }
.single { border-right: 0; white-space: nowrap; padding-top: 0; font-family: "Noto Sans", sans-serif; font-size: 11px; }
.terminal {
  position: absolute;
  box-sizing: border-box;
  width: 32px;
  height: 16px;
  border: 2px solid currentColor;
  padding: 1px;
  background: #fff;
  font: bold 9px/10px "DejaVu Sans Mono", monospace;
}
.terminal span { display: block; height: 10px; box-sizing: border-box; border: 1px solid currentColor; text-align: center; line-height: 9px; padding-right: 1px; }
.terminal i { position: absolute; top: 0; right: 0; width: 8px; height: 12px; background: color-mix(in srgb, currentColor 35%, transparent); }
.terminal i::after { content: ""; position: absolute; top: 3px; right: 0; border: solid transparent; border-width: 3px 0 3px 4px; border-left-color: #000; }
.sink { border-width: 1px; padding: 2px; }
.sink i { left: 1px; right: auto; top: 1px; }
.sink i::after { right: 1px; }
.purple { color: #800080; }
.blue { color: #0000ff; }
.green { color: #008000; }
.pink { color: #ff00ff; }
.constant { position: absolute; box-sizing: border-box; border: 2px solid #00f; background: #fff; text-align: center; font-family: "Noto Sans", sans-serif; font-size: 11px; }
.path-constant, .ring, .selector { position: absolute; box-sizing: border-box; display: flex; align-items: center; background: #fff; }
.path-constant { border: 2px solid #008080; }
.path-constant input { flex: 1; min-width: 0; margin-left: 1px; }
.ring { border: 2px solid #00f; padding: 0 1px; }
.ring select, .selector select { flex: 1; min-width: 0; height: 15px; line-height: 15px; }
.ring select { margin-left: 2px; }
.selector { border: 1px solid #000; }
.selector select { padding-left: 4px; }
.selector .drop { margin-right: 2px; }
.selector button { width: 7px; height: 15px; display: grid; place-items: center; border-right: 1px solid #000; }
.selector button:last-child { border-right: 0; border-left: 1px solid #000; }
.tunnel { position: absolute; width: 9px; height: 9px; box-sizing: border-box; border: 1px solid #000; background: #800080; }
.tunnel.error { background: #808000; }
.vscroll { display: flex; flex-direction: column; background: linear-gradient(90deg, #e3e3e3, #f0f0f0 40%); padding: 7px 0 6px 1px; }
.vscroll button { display: grid; place-items: center; width: 15px; height: 5px; }
.vthumb { flex: 1; width: 13px; margin: 172px 0 17px; border: 1px solid #909090; background: linear-gradient(90deg, #fafafa, #e6e6e6 45%, #bcbcc0); position: relative; border-radius: 2px; }
.vthumb i { position: absolute; left: 3px; top: calc(50% - 4px); width: 7px; height: 7px; background: repeating-linear-gradient(#555 0 1px, #fff 1px 2px, transparent 2px 3px); }
.hscroll { position: relative; display: flex; grid-column: 1 / -1; background: linear-gradient(#e3e3e3, #f0f0f0); }
.hthumb { margin-left: 25%; width: 54%; border: 1px solid #909090; border-bottom: 0; background: #f4f4f4; }
.hthumb i { display: block; width: 9px; height: 3px; margin: 2px auto 0; background: repeating-linear-gradient(90deg, #555 0 1px, #fff 1px 3px); }
.arrow { position: absolute; left: 8px; top: 4px; border: solid transparent; border-width: 2px 3px 2px 0; border-right-color: #333; }
.palette { position: absolute; right: 131px; bottom: 0; width: 78px; height: 146px; box-sizing: border-box; padding: 1px 4px 0 3px; border: 1px solid #555; border-bottom: 0; background: linear-gradient(#c3d3e6, #dce6f2 20px); overflow: hidden; }
.palette-title { display: flex; align-items: center; justify-content: space-between; height: 19px; color: #444; }
.palette-title button { display: grid; place-items: center; width: 13px; height: 13px; border: 1px solid #8795a8; border-radius: 2px; box-sizing: border-box; }
.palette-body { display: grid; grid-template-columns: repeat(3, 1fr); grid-template-rows: repeat(4, 21px) 37px; gap: 1px; background: #000; border: 1px solid #777; border-bottom: 0; }
.palette-body button { display: grid; place-items: center; background: #f0f0f0; overflow: hidden; min-width: 0; box-shadow: inset 1px 1px #fff; }
.palette-body .on { background: #808080; box-shadow: none; }
.palette-body .auto { grid-column: 1 / -1; display: flex; align-items: center; justify-content: space-around; }
.palette-body .colour { grid-column: 1 / -1; }
.led { width: 30px; height: 13px; box-sizing: border-box; border: 2px solid #999; background: radial-gradient(circle at 30% 30%, #7c9a70, #063a06 60%); }
.taskbar {
  display: flex;
  align-items: center;
  height: 40px;
  box-sizing: border-box;
  border-top: 1px solid #3d4b5c;
  box-shadow: inset 0 1px #c8d8ea;
  background: linear-gradient(90deg, #8093ac 0, #8396b0 48px, transparent 76px, transparent calc(100% - 208px), #8496ae calc(100% - 175px)), #a6c0dc;
}
.taskbar button { display: grid; place-items: center; }
.start { width: 57px; padding-right: 3px; }
.task { width: 64px; height: 38px; margin-left: 1px; box-sizing: border-box; }
.task.media { width: 62px; padding-left: 2px; }
.start { box-sizing: border-box; }
.task.open { width: 60px; border: 1px solid #4a5a6e; border-radius: 3px; box-shadow: inset 0 0 0 1px #eef4fa; background: linear-gradient(135deg, #dde7f2, #aec4de); }
.task.last { width: 55px; background: linear-gradient(135deg, #f2f6fb, #ccd9e8); box-shadow: inset 0 0 0 1px #eef4fa, 3px 0 #b9cbe0, 4px 0 #4a5a6e; }
.tray { display: flex; align-items: center; gap: 7px; margin-left: auto; }
.clock { display: flex; flex-direction: column; align-items: center; width: 74px; margin-left: 4px; color: #fff; line-height: 17px; }
.peek { width: 14px; height: 39px; background: linear-gradient(135deg, #7c8da3, #3c4a5c 50%, #66788f); border-left: 1px solid #33404f; }
</style>
